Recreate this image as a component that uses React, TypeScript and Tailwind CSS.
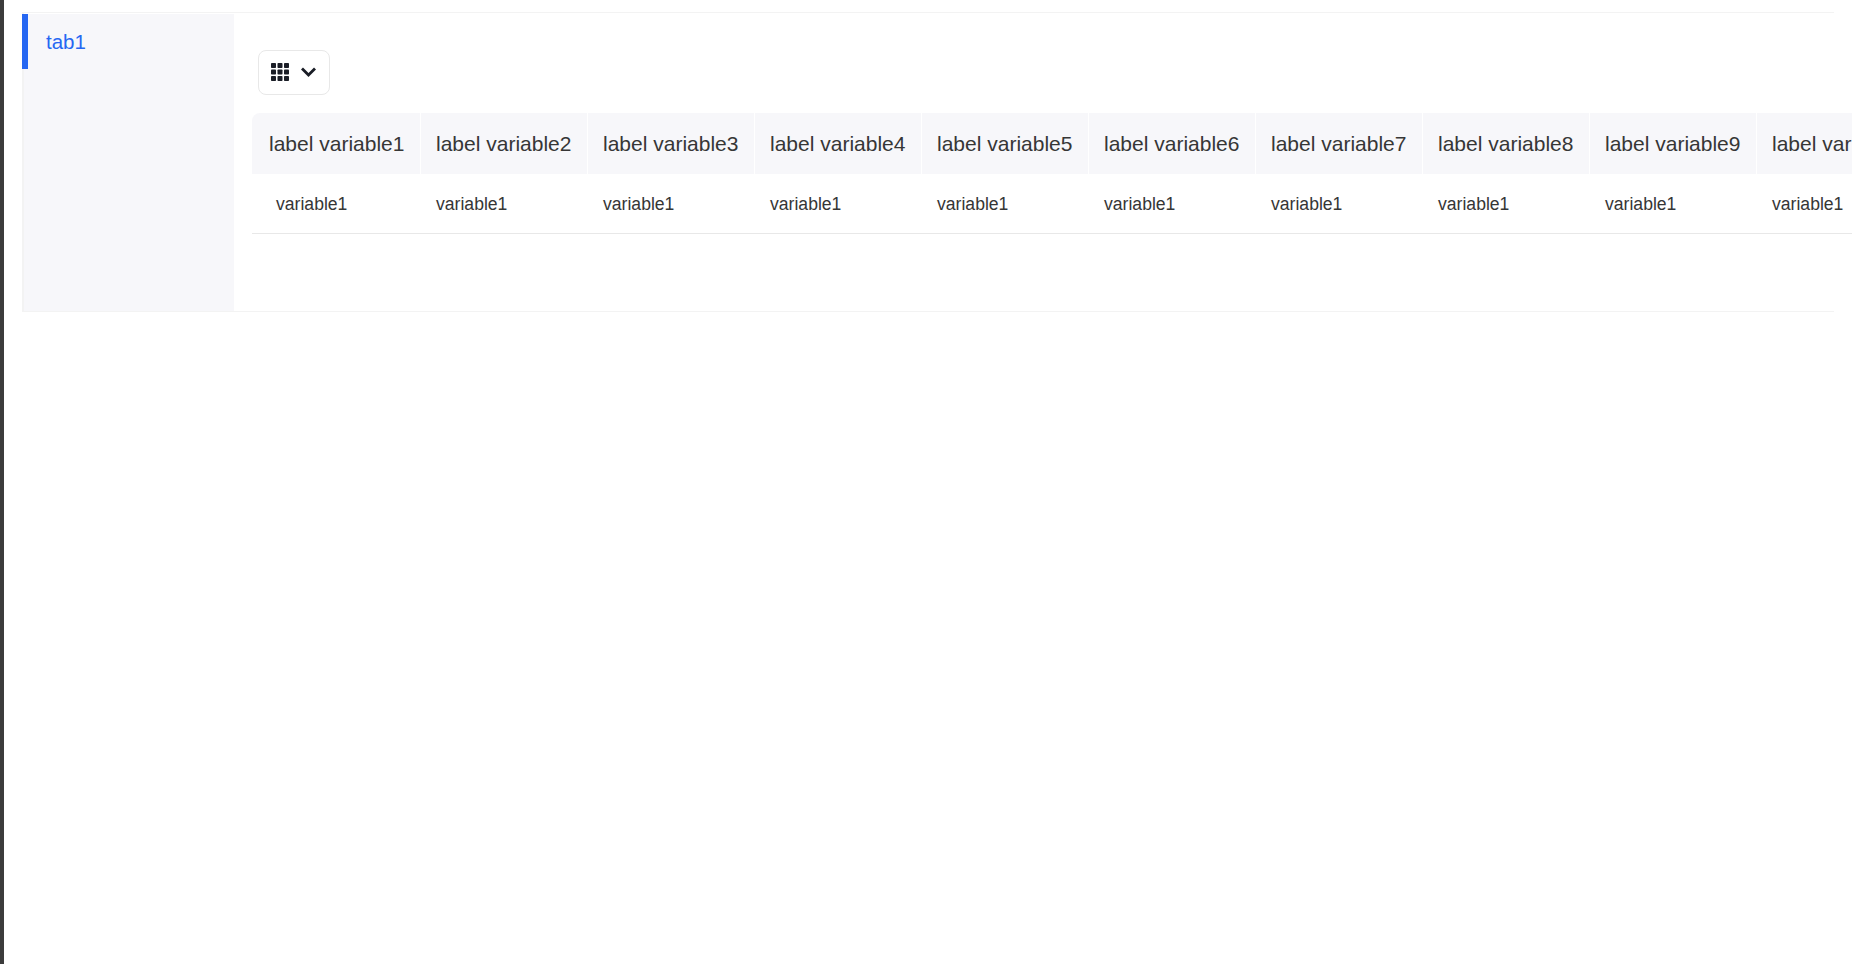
import React from 'react';

const columns = [1, 2, 3, 4, 5, 6, 7, 8, 9, 10];

const GridIcon: React.FC = () => (
  <svg width="18" height="18" viewBox="0 0 18 18" fill="#1a1d26">
    {[0, 6.5, 13].map((y) =>
      [0, 6.5, 13].map((x) => <rect key={`${x}-${y}`} x={x} y={y} width="5" height="5" rx="0.8" />)
    )}
  </svg>
);

const ChevronIcon: React.FC = () => (
  <svg width="15" height="10" viewBox="0 0 15 10" fill="none" stroke="#1a1d26" strokeWidth="2.8">
    <path d="M1 1.5 L7.5 8 L14 1.5" />
  </svg>
);

const App: React.FC = () => {
  return (
    <div className="flex h-[964px] w-[1852px] overflow-hidden bg-white font-['Liberation_Sans',Arial,sans-serif] text-[#363636]">
      <div className="h-full w-1 shrink-0 bg-[#3c3c3c]" />
      <div className="ml-[18px] mt-3 flex h-[300px] w-[1812px] shrink-0 border-y border-l-2 border-[#f3f3f3] pt-px">
        <div className="w-[210px] shrink-0 bg-[#f7f7fa]">
          <div className="-ml-0.5 flex h-[55px] items-start border-l-[6px] border-[#2667f2] pl-[18px] pt-[14px] text-[20.5px] leading-[28px] text-[#2667f2]">
            tab1
          </div>
        </div>
        <div className="min-w-0 flex-1 pl-[18px]">
          <div className="ml-1.5 mt-9 flex h-[45px] w-[72px] items-center gap-3 rounded-lg border border-[#e8e8e8] pb-0.5 pl-3">
            <GridIcon />
            <ChevronIcon />
          </div>
          <div className="mt-[18px] w-max">
            <div className="flex h-[61px] gap-px">
              {columns.map((n) => (
                <div
                  key={n}
                  className={`flex items-center whitespace-nowrap bg-[#f7f7fa] text-[21px] ${
                    n === 1 ? 'w-[168px] rounded-tl-lg pl-[17px]' : 'w-[166px] pl-[15px]'
                  }`}
                >
                  label variable{n}
                </div>
              ))}
            </div>
            <div className="flex h-[60px] gap-px border-b border-[#e8e8e8] pt-0.5">
              {columns.map((n) => (
                <div
                  key={n}
                  className={`flex items-center whitespace-nowrap text-[17.6px] ${n === 1 ? 'w-[168px] pl-6' : 'w-[166px] pl-[15px]'}`}
                >
                  variable1
                </div>
              ))}
            </div>
          </div>
        </div>
      </div>
    </div>
  );
};

export default App;
